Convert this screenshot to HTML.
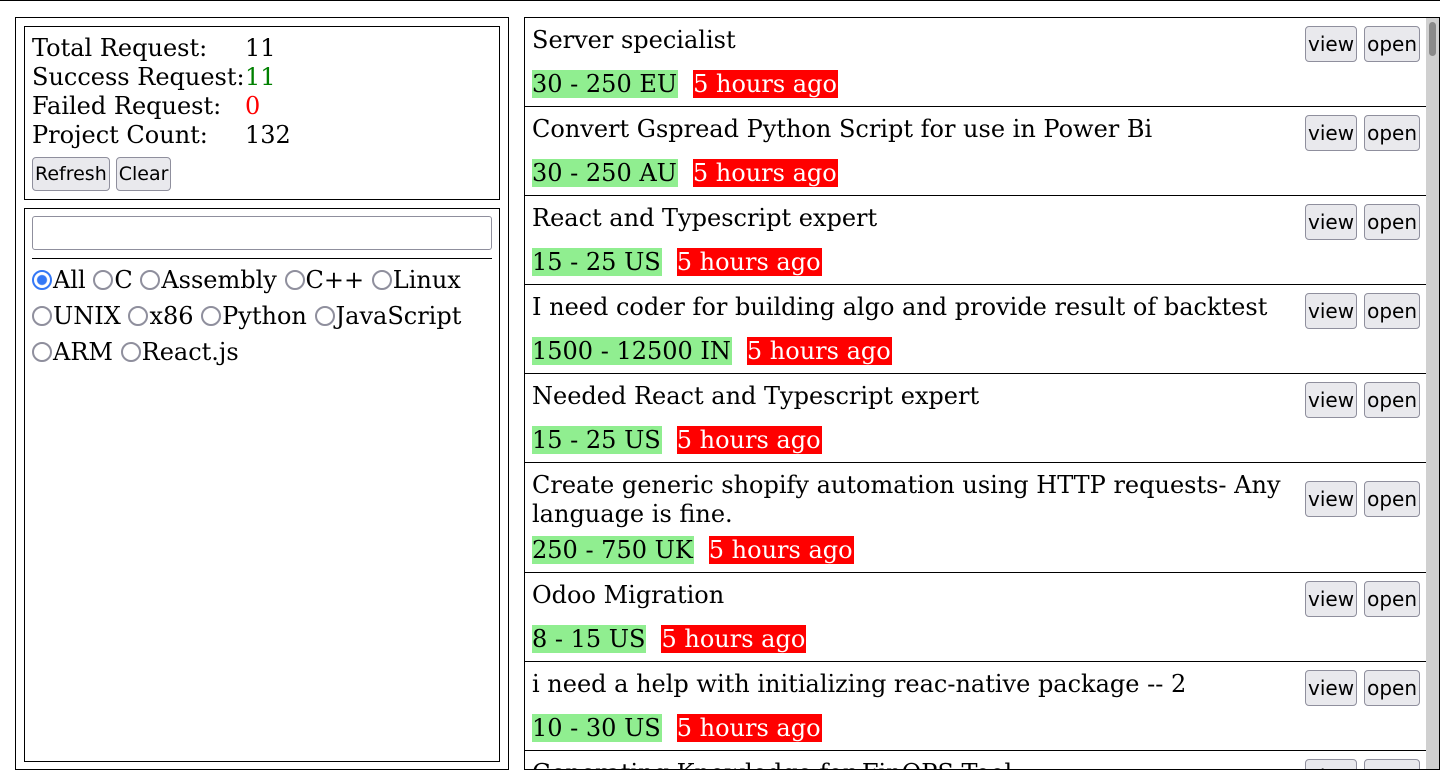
<!DOCTYPE html>
<html><head><meta charset="utf-8"><style>
*{box-sizing:border-box}
html,body{margin:0;width:1440px;height:784px;overflow:hidden}
body{background:#fff;font-family:"DejaVu Serif","Liberation Serif",serif;font-size:24px;color:#000;border-top:1px solid #000;position:relative}
.left{position:absolute;left:15px;top:16px;width:494px;height:753px;border:1px solid #000}
.b1{position:absolute;left:8px;top:8px;width:476px;height:174px;border:1px solid #000;padding:7px 0 0 7px}
.row{height:29px;line-height:29px;white-space:nowrap}
.row span.l{display:inline-block;width:213px}
button{font-family:"DejaVu Sans",sans-serif;font-size:20px;background:#e9e9ed;border:1px solid #8f8f9d;border-radius:4px;padding:0 2px;height:34px;color:#000}
.btns{margin-top:7px}
.btns button{margin-right:6px;font-size:19px}
.b2{position:absolute;left:8px;top:190px;width:476px;height:554px;border:1px solid #000;padding:7px 7px}
.inp{height:34px;border:1px solid #8f8f9d;border-radius:3px}
.hr{border-top:1px solid #000;margin-top:8px}
.radios{margin-top:3px;line-height:36px}
.r{display:inline-block;width:20px;height:20px;border:2px solid #8f8f9d;border-radius:50%;vertical-align:-2px;margin-right:1px}
.r.on{border-color:#3478f6;background:radial-gradient(circle,#3478f6 0 4.5px,#fff 5.5px)}
.opt{white-space:nowrap;margin-right:0}
.right{position:absolute;left:524px;top:16px;width:916px;height:753px;border:1px solid #000;overflow:hidden}
.sb{position:absolute;right:0;top:0;width:13px;height:100%;background:#d0d0d0}
.sb i{position:absolute;left:3px;top:4px;width:7px;height:34px;background:#8a8a8a;border-radius:4px}
.item{border-bottom:1px solid #000;width:903px;padding:8px 7px 8px 7px;position:relative}
.t{min-height:44px;padding-right:128px;line-height:29px}
.ib{position:absolute;right:8px;top:8px}
.ib button{height:36px;margin-left:7px}
.tags{height:28px;line-height:28px;white-space:nowrap}
.g{background:#90ee90;padding:0 1px 0 0;display:inline-block;margin-right:15px}
.rd{background:#f00;color:#fff;padding:0 1px 0 0;display:inline-block}
</style></head><body>
<div class="left">
<div class="b1">
<div class="row"><span class="l">Total Request:</span>11</div>
<div class="row"><span class="l">Success Request:</span><span style="color:green">11</span></div>
<div class="row"><span class="l">Failed Request:</span><span style="color:red">0</span></div>
<div class="row"><span class="l">Project Count:</span>132</div>
<div class="btns"><button>Refresh</button><button>Clear</button></div>
</div>
<div class="b2">
<div class="inp"></div>
<div class="hr"></div>
<div class="radios">
<span class="opt"><span class="r on"></span>All</span> <span class="opt"><span class="r"></span>C</span> <span class="opt"><span class="r"></span>Assembly</span> <span class="opt"><span class="r"></span>C++</span> <span class="opt"><span class="r"></span>Linux</span><br>
<span class="opt"><span class="r"></span>UNIX</span> <span class="opt"><span class="r"></span>x86</span> <span class="opt"><span class="r"></span>Python</span> <span class="opt"><span class="r"></span>JavaScript</span><br>
<span class="opt"><span class="r"></span>ARM</span> <span class="opt"><span class="r"></span>React.js</span>
</div>
</div>
</div>
<div class="right">
<div class="item"><div class="t">Server specialist</div><div class="ib"><button>view</button><button>open</button></div><div class="tags"><span class="g">30 - 250 EU</span><span class="rd">5 hours ago</span></div></div>
<div class="item"><div class="t">Convert Gspread Python Script for use in Power Bi</div><div class="ib"><button>view</button><button>open</button></div><div class="tags"><span class="g">30 - 250 AU</span><span class="rd">5 hours ago</span></div></div>
<div class="item"><div class="t">React and Typescript expert</div><div class="ib"><button>view</button><button>open</button></div><div class="tags"><span class="g">15 - 25 US</span><span class="rd">5 hours ago</span></div></div>
<div class="item"><div class="t">I need coder for building algo and provide result of backtest</div><div class="ib"><button>view</button><button>open</button></div><div class="tags"><span class="g">1500 - 12500 IN</span><span class="rd">5 hours ago</span></div></div>
<div class="item"><div class="t">Needed React and Typescript expert</div><div class="ib"><button>view</button><button>open</button></div><div class="tags"><span class="g">15 - 25 US</span><span class="rd">5 hours ago</span></div></div>
<div class="item"><div class="t">Create generic shopify automation using HTTP requests- Any language is fine.</div><div class="ib" style="top:18px"><button>view</button><button>open</button></div><div class="tags" style="margin-top:7px"><span class="g">250 - 750 UK</span><span class="rd">5 hours ago</span></div></div>
<div class="item"><div class="t">Odoo Migration</div><div class="ib"><button>view</button><button>open</button></div><div class="tags"><span class="g">8 - 15 US</span><span class="rd">5 hours ago</span></div></div>
<div class="item"><div class="t">i need a help with initializing reac-native package -- 2</div><div class="ib"><button>view</button><button>open</button></div><div class="tags"><span class="g">10 - 30 US</span><span class="rd">5 hours ago</span></div></div>
<div class="item"><div class="t">Generating Knowledge for FinOPS Tool</div><div class="ib"><button>view</button><button>open</button></div></div>
<div class="sb"><i></i></div>
</div>
</body></html>
